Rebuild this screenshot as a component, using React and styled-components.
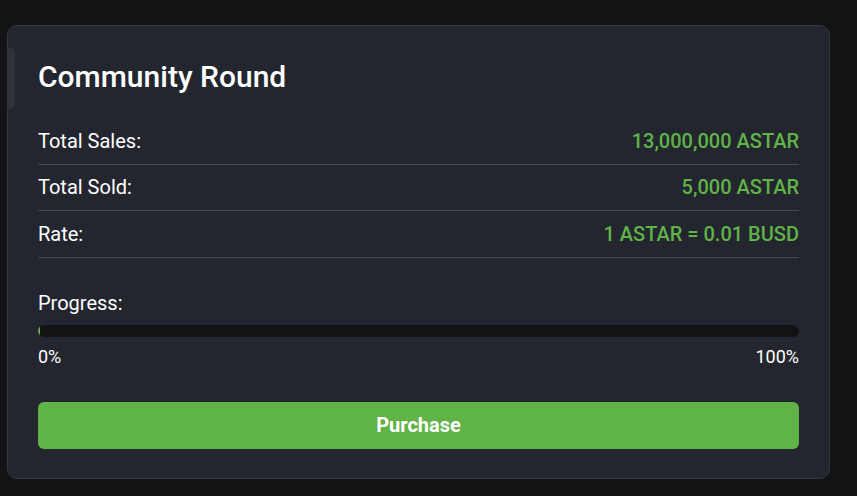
import styled, { createGlobalStyle } from 'styled-components';

const GlobalStyle = createGlobalStyle`
  * {
    box-sizing: border-box;
  }

  body {
    margin: 0;
    background: #131315;
    font-family: Roboto, 'Liberation Sans', sans-serif;
    color: #ffffff;
  }
`;

const stats = [
  { label: 'Total Sales:', value: '13,000,000 ASTAR' },
  { label: 'Total Sold:', value: '5,000 ASTAR' },
  { label: 'Rate:', value: '1 ASTAR = 0.01 BUSD' }
];

function App() {
  const progress = 0;

  return (
    <>
      <GlobalStyle />
      <Page>
        <Card>
          <Handle />
          <Title>Community Round</Title>
          <StatList>
            {stats.map((row) => (
              <StatRow key={row.label}>
                <Label>{row.label}</Label>
                <Value>{row.value}</Value>
              </StatRow>
            ))}
          </StatList>

          <ProgressBlock>
            <Label>Progress:</Label>
            <Track>
              <Fill style={{ width: `${progress}%` }} />
            </Track>
            <Scale>
              <span>0%</span>
              <span>100%</span>
            </Scale>
          </ProgressBlock>

          <Button type="button">Purchase</Button>
        </Card>
      </Page>
    </>
  );
}

export default App;

const Page = styled.main`
  min-height: 100vh;
  padding: 25px 27px 16px 7px;
`;

const Card = styled.section`
  position: relative;
  width: 823px;
  background: #23262f;
  border: 1px solid #353842;
  border-radius: 10px;
  padding: 33px 30px 29px 30px;
`;

const Handle = styled.div`
  position: absolute;
  left: -1px;
  top: 22px;
  width: 8px;
  height: 61px;
  background: #2f323b;
  border-radius: 0 5px 5px 0;
`;

const Title = styled.h2`
  margin: 0 0 23px;
  font-size: 30px;
  line-height: 36px;
  font-weight: 500;
`;

const StatList = styled.div`
  display: flex;
  flex-direction: column;
`;

const StatRow = styled.div`
  display: flex;
  align-items: center;
  justify-content: space-between;
  height: 46.5px;
  border-bottom: 1px solid #464953;
`;

const Label = styled.span`
  font-size: 20px;
  line-height: 24px;
  font-weight: 400;
`;

const Value = styled.span`
  font-size: 20px;
  line-height: 24px;
  font-weight: 500;
  color: #5fb347;
`;

const ProgressBlock = styled.div`
  display: flex;
  flex-direction: column;
  margin-top: 33px;
`;

const Track = styled.div`
  height: 12px;
  margin-top: 10px;
  background: #131315;
  border-radius: 6px;
  overflow: hidden;
`;

const Fill = styled.div`
  height: 100%;
  min-width: 2px;
  background: #5fb347;
  border-radius: 6px;
`;

const Scale = styled.div`
  display: flex;
  justify-content: space-between;
  margin-top: 10px;
  font-size: 18px;
  line-height: 20px;
`;

const Button = styled.button`
  width: 100%;
  height: 47px;
  margin-top: 35px;
  border: none;
  border-radius: 6px;
  background: #5fb347;
  color: #ffffff;
  font-family: Roboto, 'Liberation Sans', sans-serif;
  font-size: 20px;
  font-weight: 700;
  cursor: pointer;
`;
